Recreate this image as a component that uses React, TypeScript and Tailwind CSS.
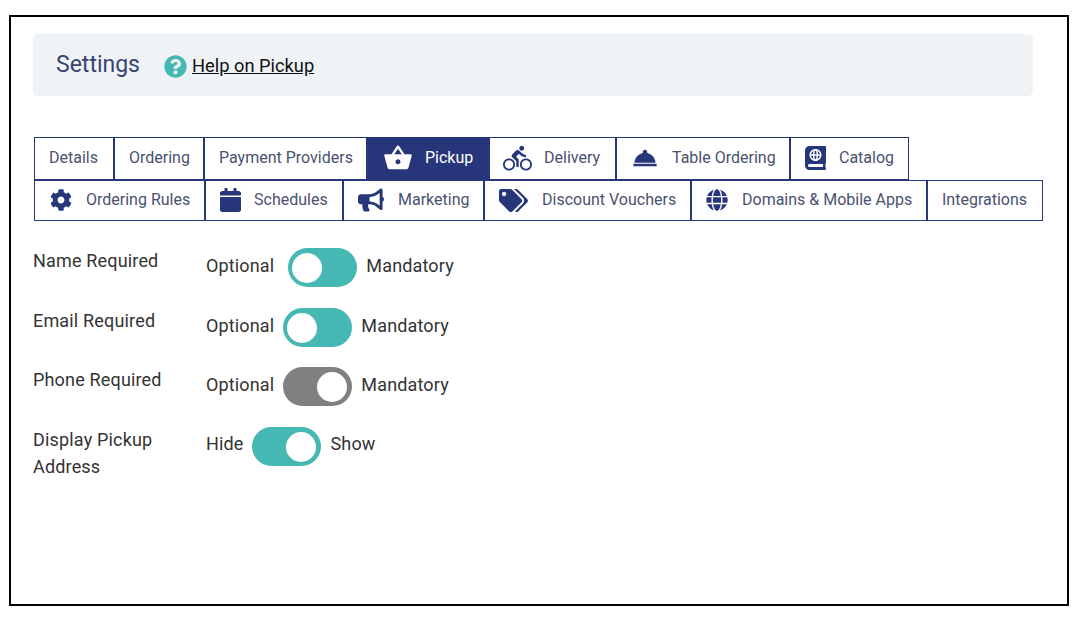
import React from "react";
import {
  FaAtlas,
  FaCog,
  FaCalendar,
  FaBullhorn,
  FaTags,
  FaGlobe,
  FaQuestionCircle,
} from "react-icons/fa";
import { MdShoppingBasket, MdDirectionsBike, MdRoomService } from "react-icons/md";

type TabDef = { label: string; width: string; icon?: React.ReactNode; active?: boolean; gap: string };

const row1: TabDef[] = [
  { label: "Details", width: "w-[80px]", gap: "" },
  { label: "Ordering", width: "w-[90px]", gap: "" },
  { label: "Payment Providers", width: "w-[163px]", gap: "" },
  { label: "Pickup", width: "w-[122px]", gap: "gap-[12px]", icon: <MdShoppingBasket className="ml-[1px] h-[30px] w-[30px]" />, active: true },
  { label: "Delivery", width: "w-[127px]", gap: "gap-[12px]", icon: <MdDirectionsBike className="ml-[-1px] h-[29px] w-[29px]" /> },
  { label: "Table Ordering", width: "w-[174px]", gap: "gap-[13px]", icon: <MdRoomService className="h-[28px] w-[28px]" /> },
  { label: "Catalog", width: "w-[119px]", gap: "gap-[13px]", icon: <FaAtlas className="h-[24px] w-[21px]" /> },
];

const row2: TabDef[] = [
  { label: "Ordering Rules", width: "w-[171px]", gap: "gap-[14px]", icon: <FaCog className="ml-[1px] h-[22px] w-[22px]" /> },
  { label: "Schedules", width: "w-[138px]", gap: "gap-[13px]", icon: <FaCalendar className="h-[24px] w-[21px]" /> },
  { label: "Marketing", width: "w-[141px]", gap: "gap-[14px]", icon: <FaBullhorn className="h-[24px] w-[26px]" /> },
  { label: "Discount Vouchers", width: "w-[207px]", gap: "gap-[14px]", icon: <FaTags className="h-[25px] w-[29px]" /> },
  { label: "Domains & Mobile Apps", width: "w-[236px]", gap: "gap-[14px]", icon: <FaGlobe className="h-[22px] w-[22px]" /> },
  { label: "Integrations", width: "w-[116px]", gap: "" },
];

function Tab({ t, h }: { t: TabDef; h: string }) {
  return (
    <div
      className={
        "flex shrink-0 items-center whitespace-nowrap border border-[#27367a] pl-[14px] pb-[1px] text-[16px] " +
        h + " " + t.width + " " + t.gap + " " +
        (t.active ? "bg-[#27367a] text-white" : "bg-white text-[#4a5170]")
      }
    >
      {t.icon && <span className={t.active ? "text-white" : "text-[#27367a]"}>{t.icon}</span>}
      <span>{t.label}</span>
    </div>
  );
}

function Toggle({ on, color }: { on: boolean; color: string }) {
  return (
    <div
      className={
        "flex h-[39px] w-[69px] shrink-0 items-center rounded-full pl-[4px] pr-[5px] " +
        color +
        (on ? " justify-end" : " justify-start")
      }
    >
      <div className="h-[30px] w-[30px] rounded-full bg-white" />
    </div>
  );
}

function Row({
  label,
  left,
  right,
  on,
  color,
  leftCls,
  rightCls,
  h,
}: {
  label: React.ReactNode;
  left: string;
  right: string;
  on: boolean;
  color: string;
  leftCls: string;
  rightCls: string;
  h: string;
}) {
  return (
    <div className={"flex items-start " + h}>
      <div className="w-[173px] text-[18px] leading-[27px] tracking-[0.17px] text-[#333]">{label}</div>
      <div className="mt-[1px] flex items-center text-[18px] tracking-[0.15px] text-[#333]">
        <span className={leftCls}>{left}</span>
        <Toggle on={on} color={color} />
        <span className={rightCls}>{right}</span>
      </div>
    </div>
  );
}

export default function App() {
  return (
    <div className="bg-white pl-[9px] pt-[15px] font-['Roboto',sans-serif]">
      <div className="h-[591px] w-[1060px] border-2 border-black pl-[22px] pt-[17px]">
        <div className="flex h-[62px] w-[1000px] items-center rounded-[5px] bg-[#eff3f6] pl-[23px]">
          <span className="text-[23px] text-[#36456f]">Settings</span>
          <FaQuestionCircle className="ml-[24px] mt-[2px] h-[23px] w-[23px] text-[#46b8b4]" />
          <span className="ml-[5px] mt-[1px] text-[18.3px] text-[#111] underline">Help on Pickup</span>
        </div>
        <div className="mt-[41px] w-[1012px] pl-[1px]">
          <div className="flex">
            {row1.map((t) => (
              <Tab key={t.label} t={t} h="h-[43px]" />
            ))}
          </div>
          <div className="flex">
            {row2.map((t) => (
              <Tab key={t.label} t={t} h="h-[41px]" />
            ))}
          </div>
        </div>
        <div className="mt-[26px] flex flex-col">
          <Row h="h-[60px]" label="Name Required" left="Optional" right="Mandatory" on={false} color="bg-[#46b8b4]" leftCls="mt-[-5px] mr-[14px]" rightCls="ml-[9px] mt-[-5px]" />
          <Row h="h-[59px]" label="Email Required" left="Optional" right="Mandatory" on={false} color="bg-[#46b8b4]" leftCls="mt-[-5px] mr-[9px]" rightCls="ml-[9px] mt-[-5px]" />
          <Row h="h-[60px]" label="Phone Required" left="Optional" right="Mandatory" on={true} color="bg-[#808080]" leftCls="mt-[-5px] mr-[9px]" rightCls="ml-[9px] mt-[-5px]" />
          <Row h="h-[60px]" label={<>Display Pickup<br />Address</>} left="Hide" right="Show" on={true} color="bg-[#46b8b4]" leftCls="mt-[-7px] mr-[8px]" rightCls="ml-[10px] mt-[-7px]" />
        </div>
      </div>
    </div>
  );
}
